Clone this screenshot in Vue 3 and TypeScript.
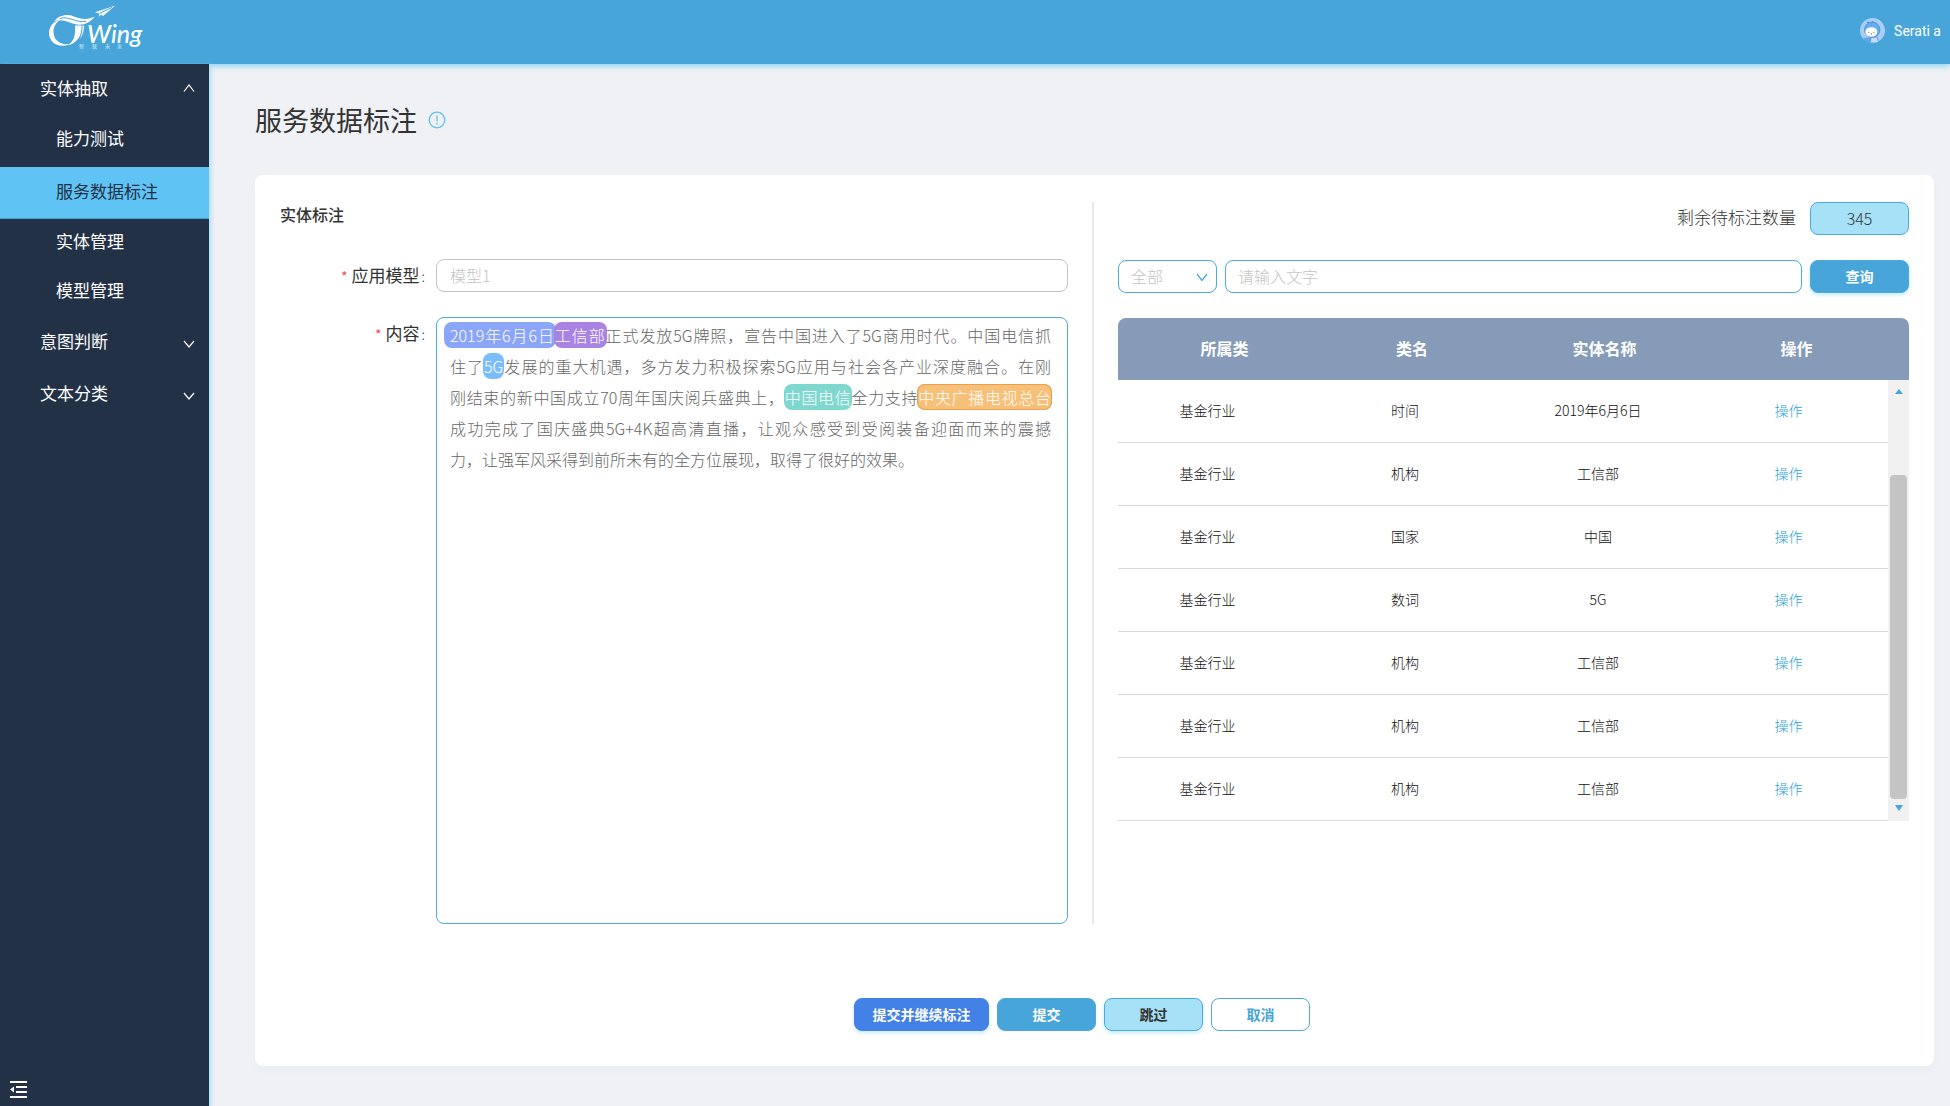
<script setup lang="ts">
import { ref } from 'vue'

interface NavGroup {
  name: string
  open: boolean
  children: string[]
}
interface Segment {
  text: string
  tag?: string
}
interface Entity {
  category: string
  kind: string
  name: string
}

const current = ref('服务数据标注')
const groups = ref<NavGroup[]>([
  { name: '实体抽取', open: true, children: ['能力测试', '服务数据标注', '实体管理', '模型管理'] },
  { name: '意图判断', open: false, children: [] },
  { name: '文本分类', open: false, children: [] },
])

const lines: Segment[][] = [
  [
    { text: '2019年6月6日', tag: 'date' },
    { text: '工信部', tag: 'org' },
    { text: '正式发放5G牌照，宣告中国进入了5G商用时代。中国电信抓' },
  ],
  [
    { text: '住了' },
    { text: '5G', tag: 'number' },
    { text: '发展的重大机遇，多方发力积极探索5G应用与社会各产业深度融合。在刚' },
  ],
  [
    { text: '刚结束的新中国成立70周年国庆阅兵盛典上，' },
    { text: '中国电信', tag: 'company' },
    { text: '全力支持' },
    { text: '中央广播电视总台', tag: 'media' },
  ],
  [{ text: '成功完成了国庆盛典5G+4K超高清直播，让观众感受到受阅装备迎面而来的震撼' }],
  [{ text: '力，让强军风采得到前所未有的全方位展现，取得了很好的效果。' }],
]

const entities: Entity[] = [
  { category: '基金行业', kind: '时间', name: '2019年6月6日' },
  { category: '基金行业', kind: '机构', name: '工信部' },
  { category: '基金行业', kind: '国家', name: '中国' },
  { category: '基金行业', kind: '数词', name: '5G' },
  { category: '基金行业', kind: '机构', name: '工信部' },
  { category: '基金行业', kind: '机构', name: '工信部' },
  { category: '基金行业', kind: '机构', name: '工信部' },
]

const model = ref('')
const keyword = ref('')
const scope = ref('all')
</script>

<template>
  <div class="app">
    <header class="topbar">
      <svg class="logo" width="110" height="48" viewBox="40 2 110 48" role="img" aria-label="CTWing">
        <g fill="#fff">
          <path d="M61 19.500C53 21 49 27 49 33C49 40.500 55 46 63 45.800C66 45.700 68 45 70 44C60 45.500 54 40 53.500 32.500C53.200 27 56 22 61 19.500Z" />
          <path d="M75 25.500H81.500C82 35 78 43 67 45.600C73.500 42 75.800 36 75 25.500Z" />
          <path d="M82.500 25.500H84C84 31 82.500 36 79.500 39.500C81.800 35 82.600 31 82.500 25.500Z" />
          <path d="M54 21.500C59 15 67 13.600 74 16.500C81 19.500 88 20 95 16.500C90 22.500 84 25.500 77 24.500C69 23.500 63 18 54 21.500Z" />
          <path d="M95 12.200L115 5.800L103 16L101.200 14.600L98.800 16.800L99.200 13.500Z" />
        </g>
        <path d="M60 18.500C68 15.500 76 23 86 21.500M99.200 13.500L112 7.500" fill="none" stroke="#48a5d9" stroke-width="1" />
        <text class="logo-word" x="87" y="43">Wing</text>
        <text class="logo-sub" x="79 92 105 117" y="48">智联未来</text>
      </svg>
      <a class="user" href="#">
        <svg width="25" height="25" viewBox="0 0 25 25" aria-hidden="true">
          <clipPath id="avatar-clip"><circle cx="12.500" cy="12.500" r="12.500" /></clipPath>
          <g clip-path="url(#avatar-clip)">
            <rect width="25" height="25" fill="#a9cff6" />
            <path d="M3 20.500Q8 18.500 12 20.500L10 25H2Z" fill="#5aa7ee" />
            <path d="M11 19h6l2 6h-9Z" fill="#c5dcf8" stroke="#5f86cf" stroke-width="0.700" />
            <path d="M7 4l2.500 1M13 3l-.5 2M17 5l-1.500 1" stroke="#4a72c4" stroke-width="1" />
            <circle cx="12.200" cy="11.800" r="7.700" fill="#62aef3" stroke="#4f7fce" stroke-width="0.700" />
            <ellipse cx="11.300" cy="14" rx="6" ry="4.800" fill="#fff" />
            <path d="M8.500 14.500h.8M13.500 14.500h.8M11 16h1" stroke="#3c4f86" stroke-width="1" />
          </g>
        </svg>
        <span>Serati a</span>
      </a>
    </header>

    <div class="body">
      <nav class="sidebar">
        <div class="nav-list">
          <section v-for="group in groups" :key="group.name" class="nav-group">
            <button class="nav-head" type="button" :aria-expanded="group.open" @click="group.open = !group.open">
              <span>{{ group.name }}</span>
              <svg :class="{ closed: !group.open }" width="12" height="8" viewBox="0 0 12 8" aria-hidden="true">
                <path :d="group.open ? 'M1 7.500L6 1L11 7.500' : 'M1 1L6 7L11 1'" fill="none" stroke="#fff" stroke-width="1.200" />
              </svg>
            </button>
            <template v-if="group.open">
              <a
                v-for="child in group.children"
                :key="child"
                href="#"
                class="nav-item"
                :class="{ active: child === current }"
                @click.prevent="current = child"
              >{{ child }}</a>
            </template>
          </section>
        </div>
        <button class="collapse" type="button" aria-label="收起菜单">
          <svg width="17" height="17" viewBox="0 0 17 17" aria-hidden="true">
            <path d="M0 1h17M6 6h11M6 11h11M0 16h17" stroke="#fff" stroke-width="2" />
            <path d="M0 8.500L4 5.500V11.500Z" fill="#fff" />
          </svg>
        </button>
      </nav>

      <main class="main">
        <div class="page-head">
          <h1>服务数据标注</h1>
          <svg width="18" height="18" viewBox="0 0 18 18" aria-hidden="true">
            <circle cx="9" cy="9" r="7.800" fill="none" stroke="#5fc3f0" stroke-width="1.300" />
            <path d="M9 4.500V10.500M9 12V13.500" stroke="#5fc3f0" stroke-width="1.300" />
          </svg>
        </div>

        <div class="card">
          <div class="columns">
            <section class="annotate">
              <h2>实体标注</h2>
              <div class="field">
                <label for="model"><i>*</i>应用模型<b>:</b></label>
                <input id="model" v-model="model" class="box muted" type="text" placeholder="模型1" />
              </div>
              <div class="field grow">
                <label id="content-label"><i>*</i>内容<b>:</b></label>
                <div class="editor" role="textbox" aria-multiline="true" aria-labelledby="content-label" contenteditable="true">
                  <p v-for="(line, i) in lines" :key="i"><span v-for="(seg, j) in line" :key="j" :class="seg.tag && ['tag', seg.tag]">{{ seg.text }}</span></p>
                </div>
              </div>
            </section>

            <div class="divider"></div>

            <section class="entities">
              <div class="remaining">
                <span>剩余待标注数量</span>
                <output class="count">345</output>
              </div>
              <form class="search" @submit.prevent>
                <div class="select">
                  <select v-model="scope" class="box" aria-label="范围">
                    <option value="all">全部</option>
                  </select>
                  <svg width="12" height="9" viewBox="0 0 12 9" aria-hidden="true">
                    <path d="M1 1L6 7.500L11 1" fill="none" stroke="#48a5d9" stroke-width="1.300" />
                  </svg>
                </div>
                <input v-model="keyword" class="box" type="text" placeholder="请输入文字" aria-label="关键字" />
                <button class="btn info shadow" type="submit">查询</button>
              </form>
              <div class="table-wrap">
                <table>
                  <thead>
                    <tr>
                      <th>所属类</th>
                      <th>类名</th>
                      <th>实体名称</th>
                      <th>操作</th>
                    </tr>
                  </thead>
                  <tbody>
                    <tr v-for="(row, i) in entities" :key="i">
                      <td>{{ row.category }}</td>
                      <td>{{ row.kind }}</td>
                      <td>{{ row.name }}</td>
                      <td><a href="#">操作</a></td>
                    </tr>
                  </tbody>
                </table>
                <div class="scrollbar" aria-hidden="true">
                  <svg width="8" height="5" viewBox="0 0 8 5"><path d="M0 5L4 0L8 5Z" fill="#48a5d9" /></svg>
                  <div class="track"><div class="thumb"></div></div>
                  <svg width="8" height="6" viewBox="0 0 8 6"><path d="M0 0H8L4 6Z" fill="#48a5d9" /></svg>
                </div>
              </div>
            </section>
          </div>

          <footer class="actions">
            <button class="btn primary shadow" type="button">提交并继续标注</button>
            <button class="btn info" type="button">提交</button>
            <button class="btn light shadow" type="button">跳过</button>
            <button class="btn plain" type="button">取消</button>
          </footer>
        </div>
      </main>
    </div>
  </div>
</template>

<style>
body {
  margin: 0;
}
</style>

<style scoped>
.app,
.app * {
  box-sizing: border-box;
}
.app {
  display: flex;
  flex-direction: column;
  min-height: 100vh;
  background: #f0f1f5;
  color: #333;
  font-family: 'Noto Sans CJK SC', sans-serif;
  font-size: 16px;
}
button,
input,
select {
  font: inherit;
}
a {
  text-decoration: none;
}
.topbar {
  position: relative;
  z-index: 1;
  display: flex;
  align-items: center;
  justify-content: space-between;
  height: 64px;
  padding: 0 9px 0 40px;
  background: #48a5d9;
  box-shadow: 0 2px 6px #83d3f3;
}
.logo {
  margin-bottom: 12px;
}
.logo-word {
  fill: #fff;
  font: italic 500 25px Lato, sans-serif;
}
.logo-sub {
  fill: #d5edf8;
  font-size: 5px;
}
.user {
  display: flex;
  align-items: center;
  gap: 9px;
  margin-bottom: 3px;
  color: #fff;
  font: 14px/20px Roboto, sans-serif;
}
.body {
  flex: 1;
  display: flex;
}
.sidebar {
  position: relative;
  z-index: 2;
  display: flex;
  flex-direction: column;
  justify-content: space-between;
  flex: 0 0 209px;
  background: #233147;
  box-shadow: 2px 2px 4px #a7e1f7;
}
.nav-list {
  display: flex;
  flex-direction: column;
  gap: 2px;
}
.nav-group {
  display: flex;
  flex-direction: column;
}
.nav-head {
  display: flex;
  align-items: center;
  justify-content: space-between;
  height: 50px;
  padding: 0 14px 2px 40px;
  border: 0;
  background: none;
  color: #fff;
  font-size: 17px;
  line-height: 24px;
}
.nav-head .closed {
  margin-top: 6px;
}
.nav-item {
  height: 49px;
  padding-left: 56px;
  color: #fff;
  font-size: 17px;
  line-height: 47px;
}
.nav-item.active {
  height: 52px;
  margin: 4px 0 -2px;
  border-bottom: 1px solid #48a5d9;
  background: #5fc3f3;
  color: #233147;
}
.collapse {
  align-self: flex-start;
  display: flex;
  margin: 0 0 8px 10px;
  padding: 0;
  border: 0;
  background: none;
}
.main {
  flex: 1;
  display: flex;
  flex-direction: column;
  min-width: 0;
  padding: 36px 16px 40px 46px;
}
.page-head {
  display: flex;
  align-items: center;
  gap: 11px;
  height: 40px;
  margin-bottom: 35px;
}
h1 {
  margin: 0;
  font-size: 27px;
  font-weight: 400;
  line-height: 40px;
}
.card {
  flex: 1;
  display: flex;
  flex-direction: column;
  padding: 27px 25px 35px;
  border-radius: 8px;
  background: #fff;
  box-shadow: 0 4px 10px #e6eef4;
}
.columns {
  flex: 1;
  display: grid;
  grid-template-columns: minmax(0, 788fr) 2px minmax(0, 791fr);
  gap: 24px;
}
.divider {
  background: #e8e8e8;
}
.annotate {
  display: flex;
  flex-direction: column;
  gap: 25px;
}
h2 {
  margin: 0 0 8px;
  font-size: 16px;
  font-weight: 500;
  line-height: 24px;
}
.field {
  display: grid;
  grid-template-columns: 156px minmax(0, 1fr);
}
.field.grow {
  flex: 1;
}
.field label {
  height: 33px;
  padding-right: 11px;
  font-size: 17px;
  line-height: 31px;
  text-align: right;
}
.field i {
  margin-right: 4px;
  color: #e0524d;
  font-size: 14px;
  font-style: normal;
}
.field b {
  margin-left: 2px;
  font-size: 14px;
  font-weight: 300;
}
.box {
  width: 100%;
  min-width: 0;
  height: 33px;
  padding: 0 12px 2px;
  border: 1px solid #48abdc;
  border-radius: 8px;
  outline: 0;
  background: #fff;
  color: #c4c4c4;
  font-size: 16px;
  font-weight: 300;
}
.box.muted {
  padding-left: 13px;
  border-color: #c4c4c4;
}
.box::placeholder {
  color: #c4c4c4;
  opacity: 1;
}
.editor {
  padding: 2px 16px 2px 13px;
  border: 1px solid #48abdc;
  border-radius: 8px;
  outline: 0;
  color: #666;
  font-weight: 300;
  line-height: 31px;
}
.editor p {
  margin: 0;
  text-align: justify;
  text-align-last: justify;
  white-space: nowrap;
}
.editor p:last-child {
  text-align-last: left;
}
.tag {
  margin: 0 -1px;
  padding: 1px;
  border-radius: 8px;
  color: #fff;
}
.tag.date {
  margin-left: -6px;
  padding-left: 6px;
  background: #8ba5f8;
}
.tag.org {
  background: #a883e3;
}
.tag.number {
  background: #7bbdfa;
}
.tag.company {
  background: #7fd8d0;
}
.tag.media {
  background: #f7c078;
  box-shadow: inset 0 0 0 1px #ec9f4a;
}
.remaining {
  display: flex;
  justify-content: flex-end;
  gap: 14px;
  margin-bottom: 25px;
  font-weight: 300;
  line-height: 31px;
}
.remaining span {
  font-size: 17px;
  line-height: 29px;
}
.count {
  width: 99px;
  height: 33px;
  border: 1px solid #48abdc;
  border-radius: 8px;
  background: #a7e1f7;
  text-align: center;
}
.search {
  display: grid;
  grid-template-columns: 99px minmax(0, 1fr) 99px;
  gap: 8px;
  margin-bottom: 25px;
}
.select {
  position: relative;
}
.select select {
  appearance: none;
}
.select svg {
  position: absolute;
  top: 13px;
  right: 9px;
  pointer-events: none;
}
.btn {
  width: 99px;
  height: 33px;
  padding: 0 0 2px;
  border: 1px solid #48abdc;
  border-radius: 8px;
  font-size: 14px;
  font-weight: 700;
}
.btn.info {
  background: #48a5d9;
  color: #fff;
}
.btn.primary {
  width: 135px;
  border-color: #4381e6;
  background: #4381e6;
  color: #fff;
}
.btn.light {
  background: #a7e1f7;
  color: #333;
}
.btn.plain {
  background: #fff;
  color: #48a5d9;
}
.btn.shadow {
  box-shadow: 0 2px 4px #c4ebfa;
}
.table-wrap {
  position: relative;
}
table,
thead,
tbody {
  display: block;
}
tr {
  display: grid;
}
thead tr {
  grid-template-columns: 213fr 162fr 223fr 193fr;
  height: 62px;
  border-radius: 8px 8px 0 0;
  background: #869bb8;
}
th {
  padding: 0;
  color: #fff;
  font-size: 16px;
  font-weight: 700;
  line-height: 60px;
}
th:last-child {
  padding-right: 32px;
}
tbody {
  padding-right: 21px;
}
tbody tr {
  grid-template-columns: 179fr 216fr 170fr 205fr;
  height: 63px;
  border-bottom: 1px solid #d9d9d9;
}
td {
  padding: 0;
  color: #111;
  font-size: 14px;
  font-weight: 300;
  line-height: 60px;
  text-align: center;
}
td:last-child {
  padding-left: 6px;
}
td a {
  color: #2fa3dc;
}
.scrollbar {
  position: absolute;
  top: 62px;
  right: 0;
  bottom: 0;
  display: flex;
  flex-direction: column;
  align-items: center;
  width: 21px;
  padding: 9px 0 10px;
  background: #f1f1f1;
}
.track {
  flex: 1;
  display: flex;
  align-items: flex-end;
  padding: 5px 0 6px;
}
.thumb {
  width: 17px;
  height: 81%;
  border-radius: 4px;
  background: #c4c4c4;
}
.actions {
  display: flex;
  justify-content: center;
  gap: 8px;
  margin-top: 74px;
  padding-right: 25px;
}
</style>
